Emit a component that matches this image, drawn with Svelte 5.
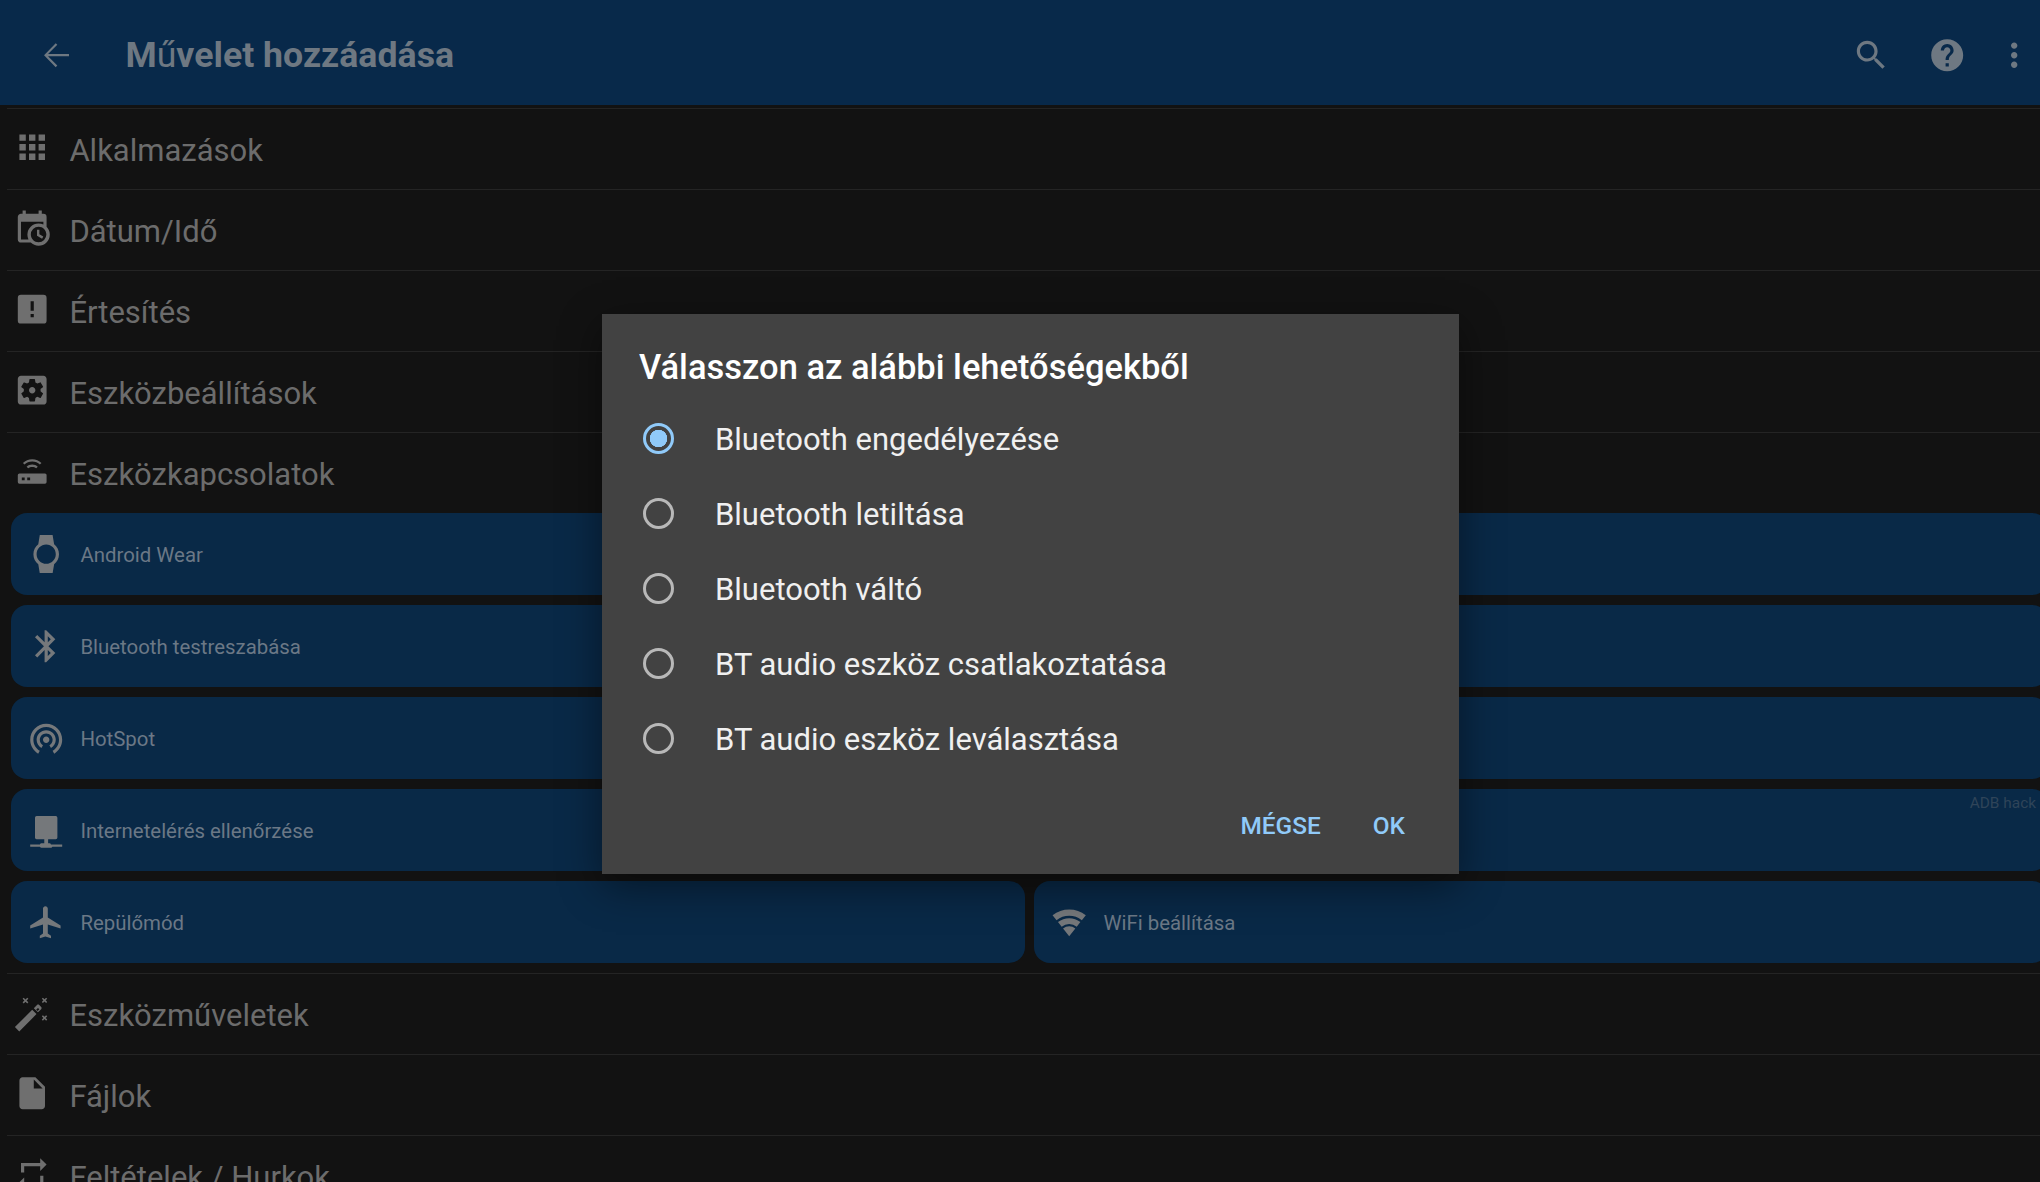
<script>
	const icons = {
		apps: 'M4 8h4V4H4v4zm6 12h4v-4h-4v4zm-6 0h4v-4H4v4zm0-6h4v-4H4v4zm6 0h4v-4h-4v4zm6-10v4h4V4h-4zm-6 4h4V4h-4v4zm6 6h4v-4h-4v4zm0 6h4v-4h-4v4z',
		calendar: 'M15,13H16.5V15.82L18.94,17.23L18.19,18.53L15,16.69V13M19,8H5V19H9.67C9.24,18.09 9,17.07 9,16A7,7 0 0,1 16,9C17.07,9 18.09,9.24 19,9.67V8M5,21C3.89,21 3,20.1 3,19V5C3,3.89 3.89,3 5,3H6V1H8V3H16V1H18V3H19A2,2 0 0,1 21,5V11.1C22.24,12.36 23,14.09 23,16A7,7 0 0,1 16,23C14.09,23 12.36,22.24 11.1,21H5M16,11.15A4.85,4.85 0 0,0 11.15,16C11.15,18.68 13.32,20.85 16,20.85A4.85,4.85 0 0,0 20.85,16C20.85,13.32 18.68,11.15 16,11.15Z',
		alert: 'M5,3H19A2,2 0 0,1 21,5V19A2,2 0 0,1 19,21H5A2,2 0 0,1 3,19V5A2,2 0 0,1 5,3M13,13V7H11V13H13M13,17V15H11V17H13Z',
		settings: 'M12 10c-1.1 0-2 .9-2 2s.9 2 2 2 2-.9 2-2-.9-2-2-2zm7-7H5c-1.11 0-2 .9-2 2v14c0 1.1.89 2 2 2h14c1.11 0 2-.9 2-2V5c0-1.1-.89-2-2-2zm-1.75 9c0 .23-.02.46-.05.68l1.48 1.16c.13.11.17.3.08.45l-1.4 2.42c-.09.15-.27.21-.43.15l-1.74-.7c-.36.28-.76.51-1.18.69l-.26 1.85c-.03.17-.18.3-.35.3h-2.8c-.17 0-.32-.13-.35-.29l-.26-1.85c-.43-.18-.82-.41-1.18-.69l-1.74.7c-.16.06-.34 0-.43-.15l-1.4-2.42c-.09-.15-.05-.34.08-.45l1.48-1.16c-.03-.23-.05-.46-.05-.69 0-.23.02-.46.05-.68l-1.48-1.16c-.13-.11-.17-.3-.08-.45l1.4-2.42c.09-.15.27-.21.43-.15l1.74.7c.36-.28.76-.51 1.18-.69l.26-1.85c.03-.17.18-.3.35-.3h2.8c.17 0 .32.13.35.29l.26 1.85c.43.18.82.41 1.18.69l1.74-.7c.16-.06.34 0 .43.15l1.4 2.42c.09.15.05.34-.08.45l-1.48 1.16c.03.23.05.46.05.69z',
		router: 'M4 13.4h16a1 1 0 0 1 1 1v4.4a1 1 0 0 1-1 1H4a1 1 0 0 1-1-1v-4.4a1 1 0 0 1 1-1zm1.5 2.6v1.6h1.8V16zm3.4 0v1.6h1.8V16zM12 4.5c2.3 0 4.3.9 5.8 2.3l-1 1C15.600 6.700 13.900 6 12 6s-3.600.7-4.800 1.800l-1-1C7.700 5.400 9.700 4.500 12 4.500zm0 3.300c1.400 0 2.600.5 3.500 1.400l-1 1c-.7-.6-1.500-.9-2.500-.9s-1.800.3-2.500.9l-1-1c.9-.9 2.100-1.400 3.500-1.400z',
		wand: 'M1.200 21.300L12 10.500l2.700 2.700L3.900 24zM13 9.500l2-2c.4-.4 1-.4 1.400 0l1.200 1.200c.4.4.4 1 0 1.400l-2 2zm1.500.9l.9.9 1.100-1.100-.9-.9zM6.700 2.900l1.100 1.100 1.100-1.100.7.7-1.100 1.100 1.100 1.100-.7.7-1.100-1.100-1.100 1.100-.7-.7 1.100-1.100-1.100-1.100zm12 0l1 1 1-1 .7.7-1 1 1 1-.7.7-1-1-1 1-.7-.7 1-1-1-1zm0 11l1 1 1-1 .7.7-1 1 1 1-.7.7-1-1-1 1-.7-.7 1-1-1-1z',
		file: 'M6 2c-1.100 0-1.990.9-1.990 2L4 20c0 1.100.89 2 1.990 2H18c1.100 0 2-.9 2-2V8l-6-6H6zm7 7V3.500L18.500 9H13z',
		repeat: 'M7 7h10v3l4-4-4-4v3H5v6h2V7zm10 10H7v-3l-4 4 4 4v-3h12v-6h-2v4z',
		watch: 'M20 12c0-2.540-1.190-4.810-3.040-6.270L16 0H8l-.95 5.730C5.190 7.190 4 9.450 4 12s1.190 4.810 3.050 6.270L8 24h8l.96-5.730C18.810 16.810 20 14.540 20 12zM6 12c0-3.310 2.690-6 6-6s6 2.690 6 6-2.690 6-6 6-6-2.690-6-6z',
		bluetooth: 'M17.710 7.710L12 2h-1v7.590L6.410 5 5 6.410 10.590 12 5 17.590 6.410 19 11 14.410V22h1l5.710-5.710-4.300-4.290 4.300-4.290zM13 5.830l1.880 1.880L13 9.590V5.830zm1.880 10.460L13 18.170v-3.760l1.880 1.880z',
		tethering: 'M12 11c-1.100 0-2 .9-2 2s.9 2 2 2 2-.9 2-2-.9-2-2-2zm6 2c0-3.310-2.690-6-6-6s-6 2.690-6 6c0 2.220 1.210 4.150 3 5.190l1-1.740c-1.190-.7-2-1.970-2-3.450 0-2.210 1.790-4 4-4s4 1.790 4 4c0 1.480-.81 2.750-2 3.450l1 1.740c1.790-1.040 3-2.970 3-5.190zM12 3C6.480 3 2 7.480 2 13c0 3.700 2.010 6.920 4.990 8.650l1-1.730C5.610 18.530 4 15.960 4 13c0-4.420 3.580-8 8-8s8 3.580 8 8c0 2.960-1.610 5.530-4 6.920l1 1.730c2.990-1.730 5-4.950 5-8.650 0-5.520-4.480-10-10-10z',
		network: 'M6 3.200h12a1 1 0 0 1 1 1v12.400a1 1 0 0 1-1 1h-4.800v2.600h.8a1 1 0 0 1 1 .7H22v1.500h-6.100a1 1 0 0 1-.9.6h-6a1 1 0 0 1-.9-.6H2v-1.500h6.100a1 1 0 0 1 .9-.7h1.800v-2.600H6a1 1 0 0 1-1-1V4.200a1 1 0 0 1 1-1z',
		plane: 'M21 16v-2l-8-5V3.500c0-.83-.67-1.500-1.500-1.500S10 2.670 10 3.500V9l-8 5v2l8-2.500V19l-2 1.500V22l3.500-1 3.500 1v-1.500L13 19v-5.500l8 2.500z',
		wifi: 'M1.600 7.600A16.800 16.800 0 0 1 22.400 7.600L19.900 10.750A12.800 12.800 0 0 0 4.100 10.750ZM5 11.900A11.300 11.300 0 0 1 19 11.900L16.710 14.790A7.600 7.600 0 0 0 7.290 14.790ZM8.150 15.890A6.200 6.200 0 0 1 15.850 15.890L12 20.750Z'
	};

	const topRows = [
		{ label: 'Alkalmazások', icon: 'apps' },
		{ label: 'Dátum/Idő', icon: 'calendar' },
		{ label: 'Értesítés', icon: 'alert' },
		{ label: 'Eszközbeállítások', icon: 'settings' },
		{ label: 'Eszközkapcsolatok', icon: 'router' }
	];

	const bottomRows = [
		{ label: 'Eszközműveletek', icon: 'wand' },
		{ label: 'Fájlok', icon: 'file' },
		{ label: 'Feltételek / Hurkok', icon: 'repeat' }
	];

	const cards = [
		{ label: 'Android Wear', icon: 'watch' },
		{ label: '', icon: '' },
		{ label: 'Bluetooth testreszabása', icon: 'bluetooth' },
		{ label: '', icon: '' },
		{ label: 'HotSpot', icon: 'tethering' },
		{ label: '', icon: '' },
		{ label: 'Internetelérés ellenőrzése', icon: 'network' },
		{ label: '', icon: '', note: 'ADB hack' },
		{ label: 'Repülőmód', icon: 'plane' },
		{ label: 'WiFi beállítása', icon: 'wifi' }
	];

	const options = [
		'Bluetooth engedélyezése',
		'Bluetooth letiltása',
		'Bluetooth váltó',
		'BT audio eszköz csatlakoztatása',
		'BT audio eszköz leválasztása'
	];

	let selected = 0;
</script>

<div class="screen">
	<header class="toolbar">
		<svg class="back" viewBox="0 0 24 24"><path d="M20 11.300H6.900l5.800-5.800-1-1L4.400 12l7.300 7.500 1-1-5.800-5.800H20z" /></svg>
		<h1>M<span class="thin">ű</span>velet hozzáadása</h1>
		<div class="actions">
			<svg class="search" viewBox="0 0 24 24"><path d="M15.500 14h-.79l-.28-.27C15.410 12.590 16 11.110 16 9.500 16 5.910 13.090 3 9.500 3S3 5.910 3 9.500 5.910 16 9.500 16c1.610 0 3.090-.59 4.230-1.570l.27.28v.79l5 4.990L20.490 19l-4.990-5zm-6 0C7.010 14 5 11.990 5 9.500S7.010 5 9.500 5 14 7.010 14 9.500 11.990 14 9.500 14z" /></svg>
			<svg class="help" viewBox="0 0 24 24"><path d="M12 2C6.480 2 2 6.480 2 12s4.480 10 10 10 10-4.480 10-10S17.520 2 12 2zm1 17h-2v-2h2v2zm2.070-7.750l-.9.920C13.450 12.900 13 13.500 13 15h-2v-.5c0-1.100.45-2.100 1.170-2.830l1.240-1.260c.37-.36.59-.86.59-1.410 0-1.100-.9-2-2-2s-2 .9-2 2H8c0-2.210 1.790-4 4-4s4 1.790 4 4c0 .88-.36 1.680-.93 2.250z" /></svg>
			<svg class="more" viewBox="0 0 24 24"><path d="M12 8c1.100 0 2-.9 2-2s-.9-2-2-2-2 .9-2 2 .9 2 2 2zm0 2c-1.100 0-2 .9-2 2s.9 2 2 2 2-.9 2-2-.9-2-2-2zm0 6c-1.100 0-2 .9-2 2s.9 2 2 2 2-.9 2-2-.9-2-2-2z" /></svg>
		</div>
	</header>

	<main class="list">
		{#each topRows as row}
			<div class="row">
				<svg class="row-icon" viewBox="0 0 24 24"><path d={icons[row.icon]} /></svg>
				<span>{row.label}</span>
			</div>
		{/each}

		<div class="cards">
			{#each cards as card}
				<div class="card">
					{#if card.icon}
						<svg class="card-icon" viewBox="0 0 24 24"><path d={icons[card.icon]} /></svg>
						<span>{card.label}</span>
					{/if}
					{#if card.note}
						<small>{card.note}</small>
					{/if}
				</div>
			{/each}
		</div>

		{#each bottomRows as row}
			<div class="row">
				<svg class="row-icon" viewBox="0 0 24 24"><path d={icons[row.icon]} /></svg>
				<span>{row.label}</span>
			</div>
		{/each}
	</main>

	<div class="dialog">
		<h2>Válasszon az alábbi lehetőségekből</h2>
		<div class="options">
			{#each options as option, i}
				<div class="option">
					<span class="radio" class:checked={i === selected}></span>
					<span class="option-label">{option}</span>
				</div>
			{/each}
		</div>
		<div class="buttons">
			<span>MÉGSE</span>
			<span>OK</span>
		</div>
	</div>
</div>

<style>
	:global(body) {
		margin: 0;
		background: #121212;
	}

	.screen {
		position: relative;
		width: 2040px;
		height: 1182px;
		overflow: hidden;
		background: #121212;
		font-family: Roboto, 'Liberation Sans', sans-serif;
		color: #6c6c6c;
	}

	svg {
		display: block;
		fill: currentColor;
		flex: none;
	}

	/* Toolbar */
	.toolbar {
		display: flex;
		align-items: center;
		height: 105px;
		padding: 5px 7px 0 37px;
		box-sizing: border-box;
		background: #08294a;
		color: #6e7882;
	}

	.back {
		width: 38.4px;
		height: 38.4px;
	}

	h1 {
		margin: 0 0 0 50px;
		font-size: 35.7px;
		font-weight: 700;
	}

	.thin {
		font-weight: 400;
	}

	.actions {
		display: flex;
		align-items: center;
		margin-left: auto;
		gap: 28px;
	}

	.actions svg {
		width: 38.4px;
		height: 38.4px;
	}

	.search {
		margin-right: 10px;
	}

	/* List rows */
	.list {
		padding-top: 3px;
	}

	.row {
		display: flex;
		align-items: center;
		height: 80px;
		margin-left: 7px;
		border-top: 1px solid #242424;
		font-size: 31px;
	}

	.row span {
		padding-top: 3px;
	}

	.row-icon {
		width: 38.4px;
		height: 38.4px;
		margin: 0 18px 3px 6px;
		color: #6f6f6f;
	}

	.cards {
		display: grid;
		grid-template-columns: 1014px 1014px;
		gap: 10px 9px;
		padding: 0 0 10px 11px;
	}

	.card {
		position: relative;
		display: flex;
		align-items: center;
		height: 82px;
		padding-left: 16px;
		border-radius: 16px;
		background: #092947;
		font-size: 20.4px;
		color: #6b7886;
	}

	.card span {
		padding-top: 2px;
	}

	.card-icon {
		width: 38.4px;
		height: 38.4px;
		margin-right: 15px;
		color: #75787b;
	}

	.card small {
		position: absolute;
		top: 5px;
		right: 12px;
		font-size: 15.4px;
		color: #2f4459;
	}

	/* Dialog */
	.dialog {
		position: absolute;
		left: 602px;
		top: 314px;
		display: flex;
		flex-direction: column;
		width: 857px;
		height: 560px;
		box-sizing: border-box;
		padding: 33px 0 0 37px;
		background: #424242;
		box-shadow: 0 12px 40px rgba(0, 0, 0, 0.45);
		color: #fff;
	}

	h2 {
		margin: 0;
		font-size: 34.5px;
		line-height: 40px;
		font-weight: 500;
	}

	.options {
		margin-top: 14px;
	}

	.option {
		display: flex;
		align-items: center;
		height: 75px;
		font-size: 31px;
		color: #f0f0f0;
	}

	.option-label {
		padding-top: 2px;
	}

	.radio {
		flex: none;
		width: 31px;
		height: 31px;
		margin-right: 45px;
		box-sizing: border-box;
		border: 3.5px solid #b8b8b8;
		border-radius: 50%;
		position: relative;
		left: 4px;
	}

	.radio.checked {
		border-color: #90caf9;
		background: radial-gradient(circle, #90caf9 0 8.5px, transparent 9px);
	}

	.buttons {
		display: flex;
		justify-content: flex-end;
		gap: 52px;
		margin-top: auto;
		padding: 0 54px 33px 0;
		font-size: 24.4px;
		font-weight: 500;
		line-height: 30px;
		color: #90caf9;
	}
</style>
